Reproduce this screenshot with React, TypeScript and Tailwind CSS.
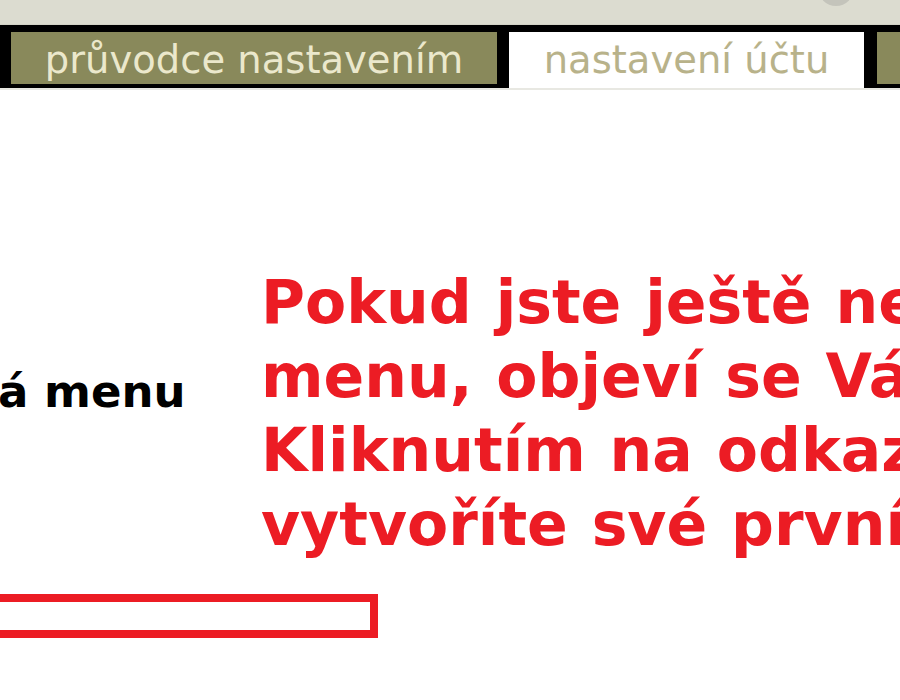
import React from "react";

export default function App() {
  return (
    <div className="w-[900px] h-[700px] bg-white overflow-hidden relative font-['DejaVu_Sans',sans-serif]">
      {/* top band */}
      <div className="h-[25px] bg-[#dcdcd0] relative overflow-hidden">
        <div className="absolute left-[818px] top-[-30px] w-[36px] h-[36px] rounded-full bg-[#c4c4bb]" />
        <div className="absolute left-0 right-0 bottom-0 h-[1px] bg-[#d2d2c6]" />
      </div>
      {/* tab bar */}
      <div className="h-[63px] bg-black flex items-start pl-[11px] pt-[7px] overflow-hidden">
        <div className="w-[486px] h-[52px] shrink-0 bg-[#89895b] text-[#ebe8cc] text-[38.5px] leading-[52px] pt-[2px] text-center whitespace-nowrap">
          průvodce nastavením
        </div>
        <div className="ml-[12px] w-[355px] h-[56px] shrink-0 bg-white text-[#b8b28a] text-[38.5px] leading-[52px] pt-[2px] text-center whitespace-nowrap">
          nastavení účtu
        </div>
        <div className="ml-[13px] w-[120px] h-[52px] shrink-0 bg-[#89895b]" />
      </div>
      <div className="h-[2px] bg-[#e8e8e2]" />
      {/* content */}
      <div className="flex items-start">
        <div className="w-[261px] shrink-0 pt-[276px]">
          <div className="ml-[-2px] text-[45px] leading-[52px] font-bold text-black whitespace-nowrap">
            á menu
          </div>
        </div>
        <div className="pt-[175px] text-[#ec1c24] font-bold text-[60px] leading-[74px] [word-spacing:3px] whitespace-nowrap">
          <div>Pokud jste ještě nevytvořili žádné</div>
          <div>menu, objeví se Vám zde informace.</div>
          <div>Kliknutím na odkaz „vytvořit menu“</div>
          <div>vytvoříte své první menu.</div>
        </div>
      </div>
      <div className="mt-[33px] ml-[-10px] w-[388px] h-[44px] border-[8px] border-[#ec1c24]" />
    </div>
  );
}
